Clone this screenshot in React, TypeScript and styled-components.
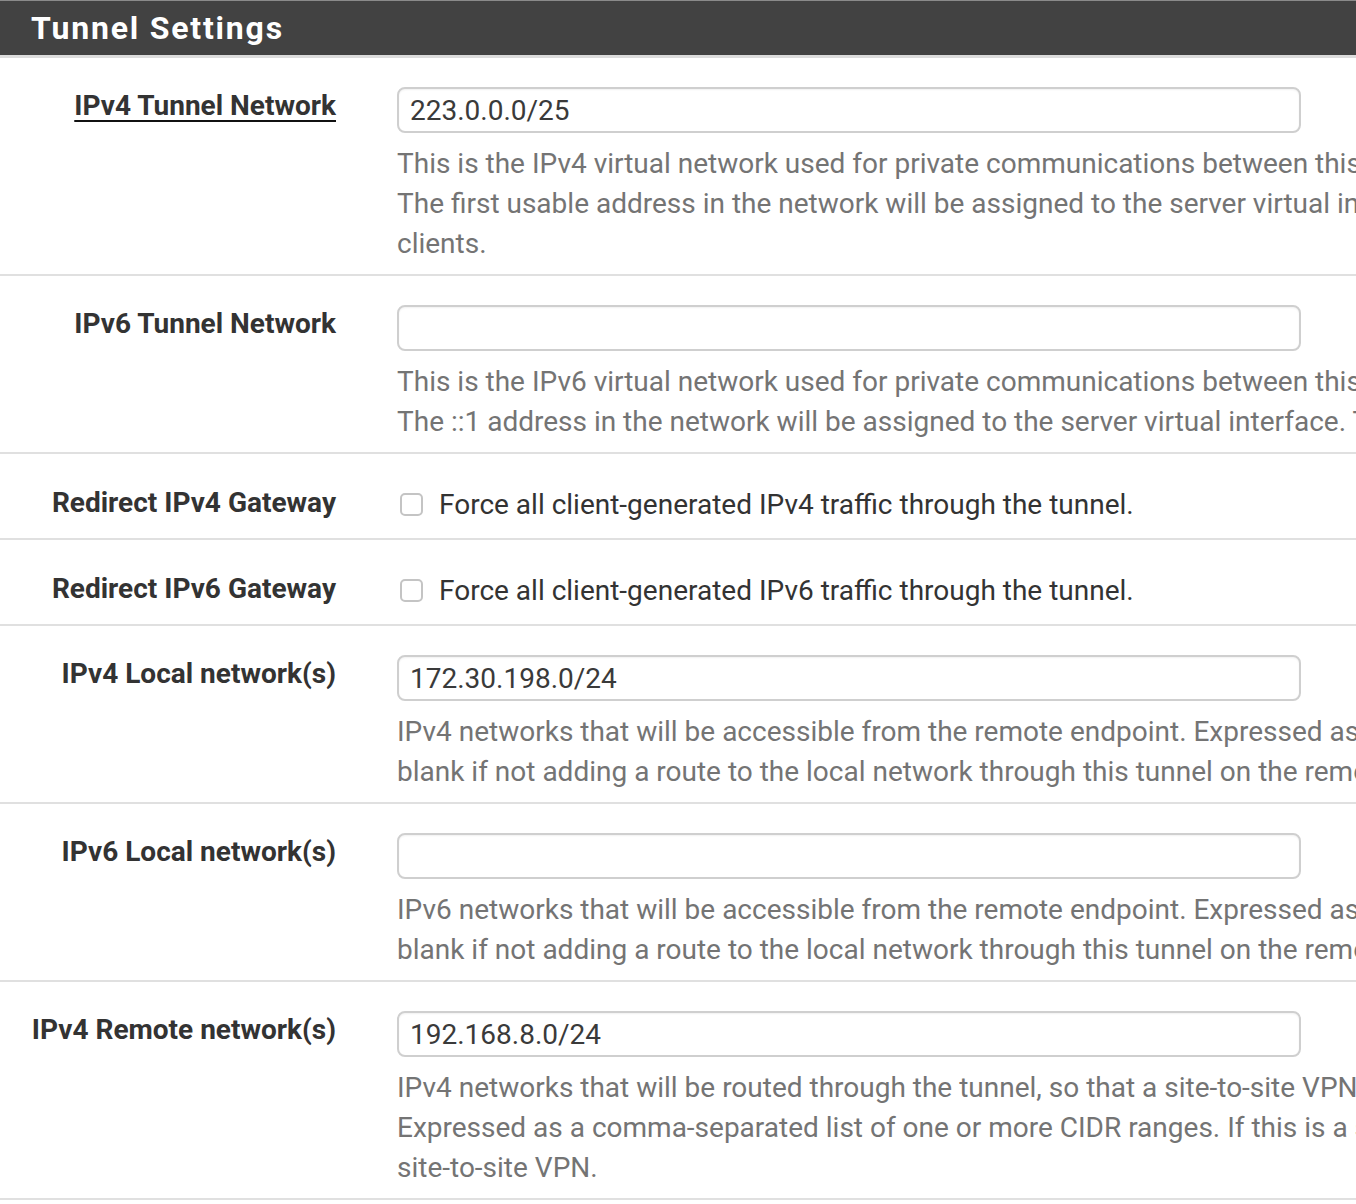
import styled, { createGlobalStyle } from "styled-components";

const GlobalStyle = createGlobalStyle`
  html, body {
    margin: 0;
    padding: 0;
    background: #ffffff;
    overflow: hidden;
  }
  body {
    font-family: Roboto, "Liberation Sans", Arial, sans-serif;
  }
`;

const Panel = styled.section`
  width: 100vw;
  overflow: hidden;
  background: #fff;
`;

const Heading = styled.h2`
  margin: 0;
  height: 58px;
  padding: 0 31px;
  display: flex;
  align-items: center;
  box-sizing: border-box;
  background: #424242;
  border-top: 1px solid #8a8a8a;
  border-bottom: 3px solid #dcdcdc;
  color: #fff;
  font-size: 32px;
  font-weight: 700;
  letter-spacing: 1.8px;
`;

const Row = styled.div<{ $check?: boolean }>`
  display: grid;
  grid-template-columns: 336px 1fr;
  column-gap: 61px;
  padding: ${(p) => (p.$check ? "30px 0 14px" : "29px 0 10px")};
  border-bottom: 2px solid #e0e0e0;
`;

const Label = styled.div<{ $underline?: boolean }>`
  text-align: right;
  font-size: 28px;
  font-weight: 700;
  color: #333;
  line-height: 40px;
  margin-top: -1px;
  white-space: nowrap;

  span {
    text-decoration: ${(p) => (p.$underline ? "underline" : "none")};
    text-decoration-color: #111;
    text-decoration-thickness: 2px;
    text-underline-offset: 5px;
  }
`;

const Field = styled.div`
  min-width: 0;
`;

const TextInput = styled.input`
  display: block;
  box-sizing: border-box;
  width: 904px;
  height: 46px;
  padding: 0 11px;
  border: 2px solid #cfcfcf;
  border-radius: 8px;
  background: #fff;
  font-family: Roboto, "Liberation Sans", Arial, sans-serif;
  font-size: 28px;
  color: #3a3a3a;
  outline: none;
  box-shadow: inset 0 1px 2px rgba(0, 0, 0, 0.06);
`;

const Help = styled.div`
  margin-top: 11px;
  font-size: 28px;
  line-height: 40px;
  color: #747474;
  white-space: nowrap;
`;

const CheckLine = styled.label`
  display: flex;
  align-items: center;
  gap: 16px;
  height: 40px;
  font-size: 28px;
  color: #333;
  white-space: nowrap;
`;

const Box = styled.input`
  appearance: none;
  margin: 0 0 0 3px;
  width: 23px;
  height: 23px;
  border: 2px solid #c4c4c4;
  border-radius: 5px;
  background: #fff;
`;

type TextRow = {
  kind: "text";
  label: string;
  underline?: boolean;
  value: string;
  help: string[];
};

type CheckRow = {
  kind: "check";
  label: string;
  text: string;
};

const rows: (TextRow | CheckRow)[] = [
  {
    kind: "text",
    label: "IPv4 Tunnel Network",
    underline: true,
    value: "223.0.0.0/25",
    help: [
      "This is the IPv4 virtual network used for private communications between this server and client hosts expressed using CIDR notation (e.g. 10.0.8.0/24).",
      "The first usable address in the network will be assigned to the server virtual interface. The remaining usable addresses will be assigned to connecting",
      "clients.",
    ],
  },
  {
    kind: "text",
    label: "IPv6 Tunnel Network",
    value: "",
    help: [
      "This is the IPv6 virtual network used for private communications between this server and client hosts expressed using CIDR notation (e.g. fe80::/64).",
      "The ::1 address in the network will be assigned to the server virtual interface. The remaining addresses will be assigned to connecting clients.",
    ],
  },
  {
    kind: "check",
    label: "Redirect IPv4 Gateway",
    text: "Force all client-generated IPv4 traffic through the tunnel.",
  },
  {
    kind: "check",
    label: "Redirect IPv6 Gateway",
    text: "Force all client-generated IPv6 traffic through the tunnel.",
  },
  {
    kind: "text",
    label: "IPv4 Local network(s)",
    value: "172.30.198.0/24",
    help: [
      "IPv4 networks that will be accessible from the remote endpoint. Expressed as a comma-separated list of one or more CIDR ranges or host/network type aliases. This may be left",
      "blank if not adding a route to the local network through this tunnel on the remote machine. This is generally set to the LAN network.",
    ],
  },
  {
    kind: "text",
    label: "IPv6 Local network(s)",
    value: "",
    help: [
      "IPv6 networks that will be accessible from the remote endpoint. Expressed as a comma-separated list of one or more IP/PREFIX or host/network type aliases. This may be left",
      "blank if not adding a route to the local network through this tunnel on the remote machine. This is generally set to the LAN network.",
    ],
  },
  {
    kind: "text",
    label: "IPv4 Remote network(s)",
    value: "192.168.8.0/24",
    help: [
      "IPv4 networks that will be routed through the tunnel, so that a site-to-site VPN can be established without manually changing the routing tables.",
      "Expressed as a comma-separated list of one or more CIDR ranges. If this is a site-to-site VPN, enter the remote LAN/s here. May be left blank for non",
      "site-to-site VPN.",
    ],
  },
];

export default function App() {
  return (
    <>
      <GlobalStyle />
      <Panel>
        <Heading>Tunnel Settings</Heading>
        {rows.map((row) =>
          row.kind === "text" ? (
            <Row key={row.label}>
              <Label $underline={row.underline}>
                <span>{row.label}</span>
              </Label>
              <Field>
                <TextInput type="text" defaultValue={row.value} />
                <Help>
                  {row.help.map((line, i) => (
                    <div key={i}>{line}</div>
                  ))}
                </Help>
              </Field>
            </Row>
          ) : (
            <Row key={row.label} $check>
              <Label>
                <span>{row.label}</span>
              </Label>
              <Field>
                <CheckLine>
                  <Box type="checkbox" />
                  {row.text}
                </CheckLine>
              </Field>
            </Row>
          )
        )}
      </Panel>
    </>
  );
}
